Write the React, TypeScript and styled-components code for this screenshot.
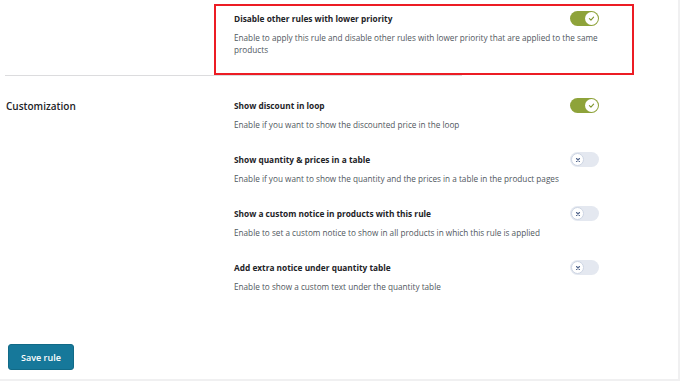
import styled, { createGlobalStyle } from 'styled-components';

const GlobalStyle = createGlobalStyle`
  html, body {
    margin: 0;
    padding: 0;
    background: #f0f0f1;
  }
  body {
    font-family: "Open Sans", "Noto Sans", sans-serif;
    -webkit-font-smoothing: antialiased;
  }
`;

const Panel = styled.div`
  width: 678px;
  height: 379px;
  background: #ffffff;
  box-sizing: border-box;
  padding: 4px 0 0 6px;
  display: flex;
  flex-direction: column;
`;

const TopSection = styled.div`
  display: grid;
  grid-template-columns: 208px auto;
`;

const Section = styled.div`
  display: grid;
  grid-template-columns: 228px 365px;
  margin-top: 22px;
`;

const SectionLabel = styled.div`
  font-size: 10px;
  font-weight: 600;
  color: #1d2327;
  line-height: 15px;
  padding-top: 1px;
`;

const Highlight = styled.div`
  width: 365px;
  border: 2px solid #ec1c24;
  padding: 5px 33px 17px 18px;
`;

const Divider = styled.div`
  width: 457px;
  height: 1px;
  background: #dcdcde;
  margin: 0 0 0 -1px;
`;

const Fields = styled.div`
  display: flex;
  flex-direction: column;
  gap: 21px;
`;

const Field = styled.div`
  display: flex;
  flex-direction: column;
  gap: 6px;
`;

const TitleRow = styled.div`
  display: flex;
  align-items: center;
  justify-content: space-between;
  height: 15px;
`;

const Title = styled.span`
  font-size: 8.3px;
  font-weight: 700;
  color: #1d2327;
  line-height: 15px;
`;

const Description = styled.p`
  margin: 0;
  font-size: 8.2px;
  line-height: 12px;
  color: #50575e;
`;

const Track = styled.span<{ $on: boolean }>`
  display: inline-flex;
  align-items: center;
  justify-content: ${(p) => (p.$on ? 'flex-end' : 'flex-start')};
  width: 29px;
  height: 15px;
  border-radius: 8px;
  box-sizing: border-box;
  padding: 0 1px;
  background: ${(p) => (p.$on ? '#8ea33a' : '#e4e8f0')};
  flex-shrink: 0;
`;

const Knob = styled.span<{ $on: boolean }>`
  width: 13px;
  height: 13px;
  border-radius: 50%;
  background: #ffffff;
  box-sizing: border-box;
  border: ${(p) => (p.$on ? 'none' : '1px solid #cdd5e3')};
  display: flex;
  align-items: center;
  justify-content: center;
`;

const SaveButton = styled.button`
  margin: 51px 0 0 2px;
  width: 66px;
  height: 26px;
  border: 1px solid #116a87;
  border-radius: 3px;
  background: #16789a;
  color: #ffffff;
  font-family: "Open Sans", "Noto Sans", sans-serif;
  font-size: 9px;
  font-weight: 600;
  padding: 0;
  cursor: pointer;
`;

const Toggle = ({ on }: { on: boolean }) => (
  <Track $on={on}>
    <Knob $on={on}>
      {on ? (
        <svg width="7" height="7" viewBox="0 0 10 10">
          <path d="M2 5.2 L4.2 7.2 L8 3" fill="none" stroke="#7f9630" strokeWidth="1.6" strokeLinecap="round" strokeLinejoin="round" />
        </svg>
      ) : (
        <svg width="6" height="6" viewBox="0 0 10 10">
          <path d="M2.5 2.5 L7.5 7.5 M7.5 2.5 L2.5 7.5" fill="none" stroke="#55688e" strokeWidth="1.8" strokeLinecap="round" />
        </svg>
      )}
    </Knob>
  </Track>
);

const fields = [
  {
    title: 'Show discount in loop',
    desc: 'Enable if you want to show the discounted price in the loop',
    on: true,
  },
  {
    title: 'Show quantity & prices in a table',
    desc: 'Enable if you want to show the quantity and the prices in a table in the product pages',
    on: false,
  },
  {
    title: 'Show a custom notice in products with this rule',
    desc: 'Enable to set a custom notice to show in all products in which this rule is applied',
    on: false,
  },
  {
    title: 'Add extra notice under quantity table',
    desc: 'Enable to show a custom text under the quantity table',
    on: false,
  },
];

export default function App() {
  return (
    <>
      <GlobalStyle />
      <Panel>
        <TopSection>
          <div />
          <Highlight>
            <Field>
              <TitleRow>
                <Title>Disable other rules with lower priority</Title>
                <Toggle on />
              </TitleRow>
              <Description>
                Enable to apply this rule and disable other rules with lower priority that are applied to the same products
              </Description>
            </Field>
          </Highlight>
        </TopSection>
        <Divider />
        <Section>
          <SectionLabel>Customization</SectionLabel>
          <Fields>
            {fields.map((f) => (
              <Field key={f.title}>
                <TitleRow>
                  <Title>{f.title}</Title>
                  <Toggle on={f.on} />
                </TitleRow>
                <Description>{f.desc}</Description>
              </Field>
            ))}
          </Fields>
        </Section>
        <SaveButton>Save rule</SaveButton>
      </Panel>
    </>
  );
}
